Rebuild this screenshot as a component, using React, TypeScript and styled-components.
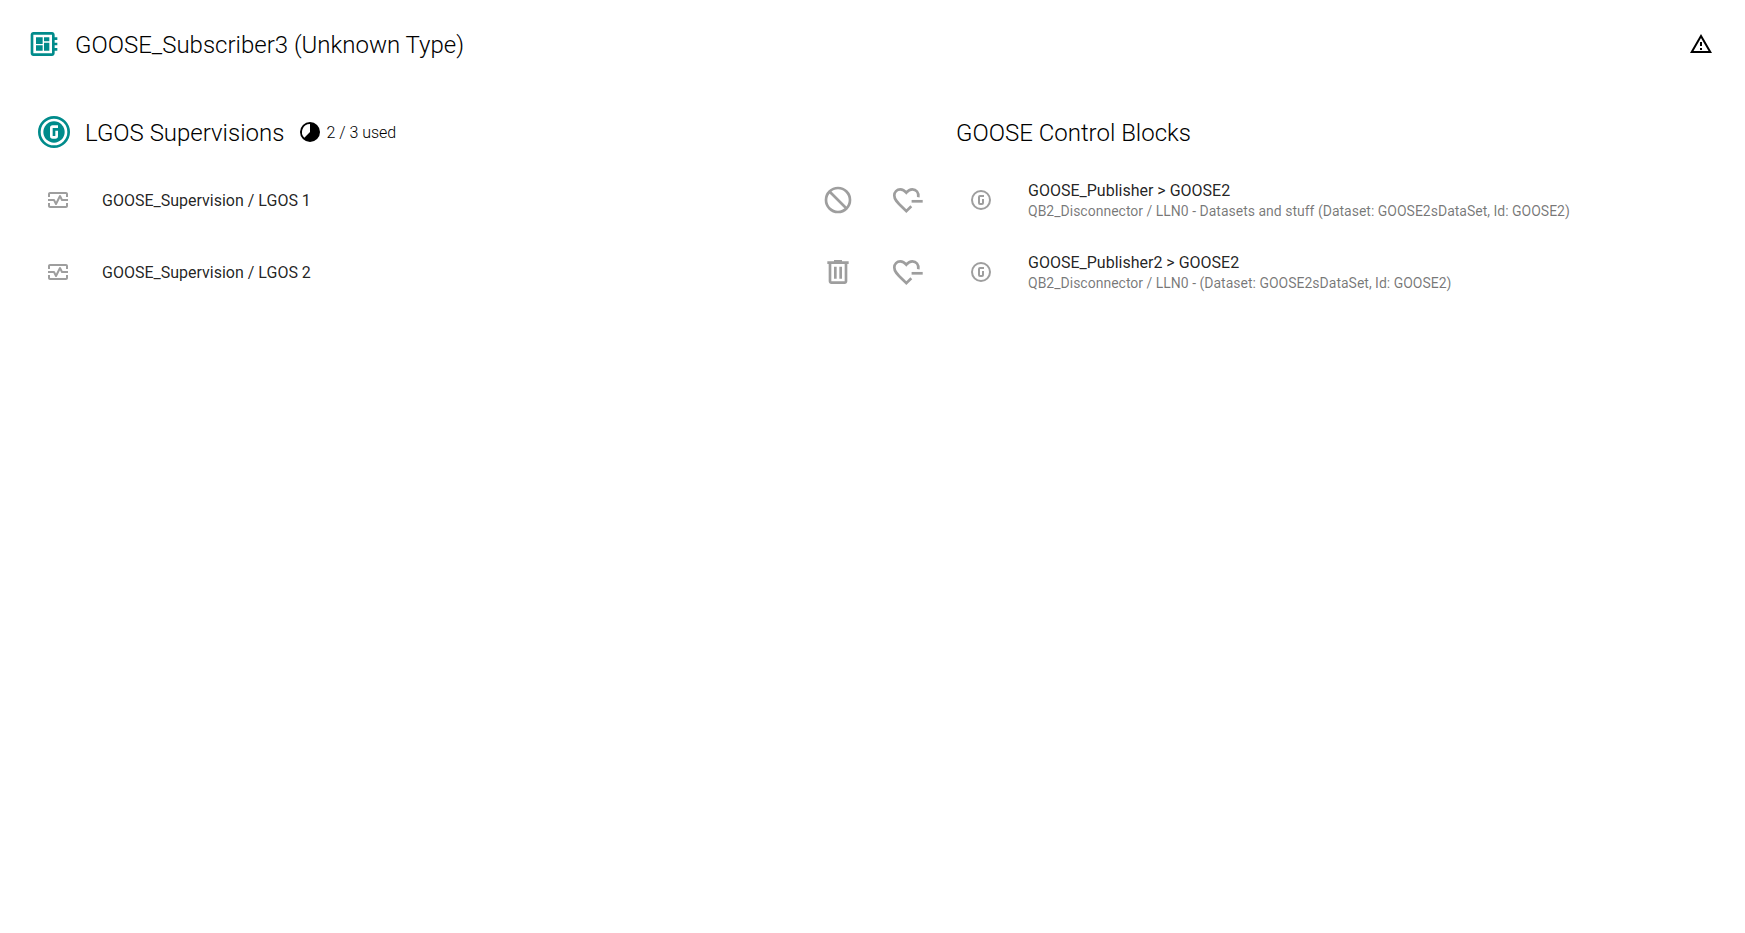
import React from 'react';
import styled, { createGlobalStyle } from 'styled-components';

const Global = createGlobalStyle`
  body { margin: 0; background: #fff; color: #000; font-family: Roboto, sans-serif; }
`;

const Page = styled.main`
  padding: 20px 32px 20px 28px;
`;

const TitleBar = styled.header`
  display: flex;
  align-items: center;
  height: 48px;
`;

const Title = styled.h1`
  flex: 1;
  margin: 0 0 0 15px;
  padding-top: 2px;
  font-size: 24px;
  line-height: 40px;
  font-weight: 300;
`;

const IconButton = styled.button<{ $tone?: string }>`
  display: flex;
  padding: 0;
  border: 0;
  background: none;
  color: ${(p) => p.$tone ?? '#9e9e9e'};
  cursor: pointer;
`;

const Columns = styled.div`
  display: grid;
  grid-template-columns: minmax(0, 928fr) minmax(0, 757fr);
  margin-top: 40px;
`;

const Section = styled.section`
  min-width: 0;
`;

const SectionHead = styled.div<{ $indent?: number }>`
  display: flex;
  align-items: center;
  height: 48px;
  padding-left: ${(p) => p.$indent ?? 0}px;
`;

const SectionTitle = styled.h2`
  margin: 0;
  padding-top: 2px;
  font-size: 24px;
  line-height: 40px;
  font-weight: 300;
`;

const LeadIcon = styled.span`
  display: flex;
  margin-right: 15px;
`;

const Usage = styled.span`
  display: flex;
  align-items: center;
  gap: 4px;
  margin-left: 14px;
`;

const UsageText = styled.span`
  padding-top: 2px;
  font-size: 16px;
  line-height: 24px;
  font-weight: 300;
`;

const List = styled.ul`
  list-style: none;
  margin: 0;
  padding: 8px 0;
`;

const Row = styled.li<{ $start: number }>`
  display: flex;
  align-items: center;
  height: 72px;
  padding-left: ${(p) => p.$start}px;
`;

const Graphic = styled.span<{ $gap: number }>`
  display: flex;
  flex: none;
  margin-right: ${(p) => p.$gap}px;
  color: #9e9e9e;
`;

const RowText = styled.div`
  flex: 1;
  min-width: 0;
  padding-top: 2px;
  white-space: nowrap;
`;

const Primary = styled.div`
  font-size: 16px;
  line-height: 20px;
  color: rgba(0, 0, 0, 0.87);
`;

const Secondary = styled.div`
  font-size: 14px;
  line-height: 20px;
  color: rgba(0, 0, 0, 0.54);
`;

const Actions = styled.div`
  display: flex;
  gap: 38px;
  margin-right: 32px;
`;

type IconProps = { size: number; d: string; box?: string; fill?: string };

const Icon = ({ size, d, box = '0 0 24 24', fill = 'currentColor' }: IconProps) => (
  <svg width={size} height={size} viewBox={box} fill={fill} aria-hidden="true">
    <path d={d} />
  </svg>
);

const BOARD =
  'M22 9V7h-2V5c0-1.1-.9-2-2-2H4c-1.1 0-2 .9-2 2v14c0 1.1.9 2 2 2h14c1.1 0 2-.9 2-2v-2h2v-2h-2v-2h2v-2h-2V9h2zm-4 10H4V5h14v14zM6 13h5v4H6zm6-6h4v3h-4zM6 7h5v5H6zm6 4h4v6h-4z';
const WARNING =
  'M12 5.99L19.53 19H4.47L12 5.99M12 2L1 21h22L12 2zm1 14h-2v2h2v-2zm0-6h-2v4h2v-4z';
const TRASH =
  'M280-120q-33 0-56.500-23.500T200-200v-520h-40v-80h200v-40h240v40h200v80h-40v520q0 33-23.500 56.500T680-120H280Zm400-600H280v520h400v-520ZM360-280h80v-360h-80v360Zm160 0h80v-360h-80v360ZM280-720v520-520Z';
const MONITOR =
  'M20 4H4c-1.100 0-2 .9-2 2v3h2V6h16v3h2V6c0-1.100-.9-2-2-2zm0 14H4v-3H2v3c0 1.100.9 2 2 2h16c1.100 0 2-.9 2-2v-3h-2v3zM14.890 7.550c-.340-.680-1.450-.680-1.790 0L10 13.760l-1.110-2.210A.988.988 0 0 0 8 11H2v2h5.380l1.720 3.450c.180.340.520.550.900.550s.720-.210.890-.550L14 10.240l1.110 2.210c.170.340.510.550.890.550h6v-2h-5.380l-1.730-3.450z';
const G_MARK =
  'M11 7h4v2h-4v6h2v-4h2v4a2 2 0 0 1-2 2h-2a2 2 0 0 1-2-2V9a2 2 0 0 1 2-2z';
const G_OUTLINE = `${G_MARK}M12 2a10 10 0 0 1 0 20a10 10 0 0 1 0-20m0 2a8 8 0 0 0 0 16a8 8 0 0 0 0-16z`;

const BlockIcon = () => (
  <svg width="32" height="32" viewBox="0 0 24 24" fill="none" stroke="currentColor" strokeWidth="2" aria-hidden="true">
    <circle cx="12" cy="12" r="9" />
    <path d="M5.600 5.600l12.800 12.800" />
  </svg>
);

const HeartMinus = () => (
  <svg width="32" height="32" viewBox="0 0 32 32" fill="none" stroke="currentColor" strokeWidth="2.700" aria-hidden="true">
    <path d="M26.300 13.200c.8-4.600-2.200-7.900-6-7.900-2.500 0-4.300 1.200-6 3.300-1.700-2.100-3.500-3.300-6-3.300-3.400 0-6 2.700-6 6.100 0 5.200 4.900 8.600 12 15.700l5-4.900" />
    <path d="M19.600 17.300h11.100" />
  </svg>
);

const GooseFilled = () => (
  <svg width="32" height="32" viewBox="0 0 24 24" aria-hidden="true">
    <circle cx="12" cy="12" r="11" fill="none" stroke="#008b8b" strokeWidth="2" />
    <circle cx="12" cy="12" r="8" fill="#008b8b" />
    <path fill="#fff" d={G_MARK} />
  </svg>
);

const Pie = () => (
  <svg width="24" height="24" viewBox="0 0 24 24" aria-hidden="true">
    <circle cx="12" cy="12" r="10" />
    <path fill="#fff" d="M12 4v8l-5.660 5.660A8 8 0 0 1 12 4z" />
  </svg>
);

const supervisions = [
  { name: 'GOOSE_Supervision / LGOS 1', removable: false },
  { name: 'GOOSE_Supervision / LGOS 2', removable: true },
];

const controlBlocks = [
  {
    name: 'GOOSE_Publisher > GOOSE2',
    detail: 'QB2_Disconnector / LLN0 - Datasets and stuff (Dataset: GOOSE2sDataSet, Id: GOOSE2)',
  },
  {
    name: 'GOOSE_Publisher2 > GOOSE2',
    detail: 'QB2_Disconnector / LLN0 - (Dataset: GOOSE2sDataSet, Id: GOOSE2)',
  },
];

export default function App() {
  return (
    <Page>
      <Global />
      <TitleBar>
        <Icon size={32} d={BOARD} fill="#008b8b" />
        <Title>GOOSE_Subscriber3 (Unknown Type)</Title>
        <IconButton $tone="#000" aria-label="Show warnings">
          <Icon size={24} d={WARNING} />
        </IconButton>
      </TitleBar>
      <Columns>
        <Section>
          <SectionHead $indent={10}>
            <LeadIcon>
              <GooseFilled />
            </LeadIcon>
            <SectionTitle>LGOS Supervisions</SectionTitle>
            <Usage>
              <Pie />
              <UsageText>2 / 3 used</UsageText>
            </Usage>
          </SectionHead>
          <List>
            {supervisions.map((s) => (
              <Row key={s.name} $start={18}>
                <Graphic $gap={32}>
                  <Icon size={24} d={MONITOR} />
                </Graphic>
                <RowText>
                  <Primary>{s.name}</Primary>
                </RowText>
                <Actions>
                  <IconButton aria-label={s.removable ? 'Delete supervision' : 'Supervision cannot be deleted'}>
                    {s.removable ? <Icon size={32} d={TRASH} box="0 -960 960 960" /> : <BlockIcon />}
                  </IconButton>
                  <IconButton aria-label="Disconnect supervision">
                    <HeartMinus />
                  </IconButton>
                </Actions>
              </Row>
            ))}
          </List>
        </Section>
        <Section>
          <SectionHead>
            <SectionTitle>GOOSE Control Blocks</SectionTitle>
          </SectionHead>
          <List>
            {controlBlocks.map((c) => (
              <Row key={c.name} $start={13}>
                <Graphic $gap={35}>
                  <Icon size={24} d={G_OUTLINE} />
                </Graphic>
                <RowText>
                  <Primary>{c.name}</Primary>
                  <Secondary>{c.detail}</Secondary>
                </RowText>
              </Row>
            ))}
          </List>
        </Section>
      </Columns>
    </Page>
  );
}
